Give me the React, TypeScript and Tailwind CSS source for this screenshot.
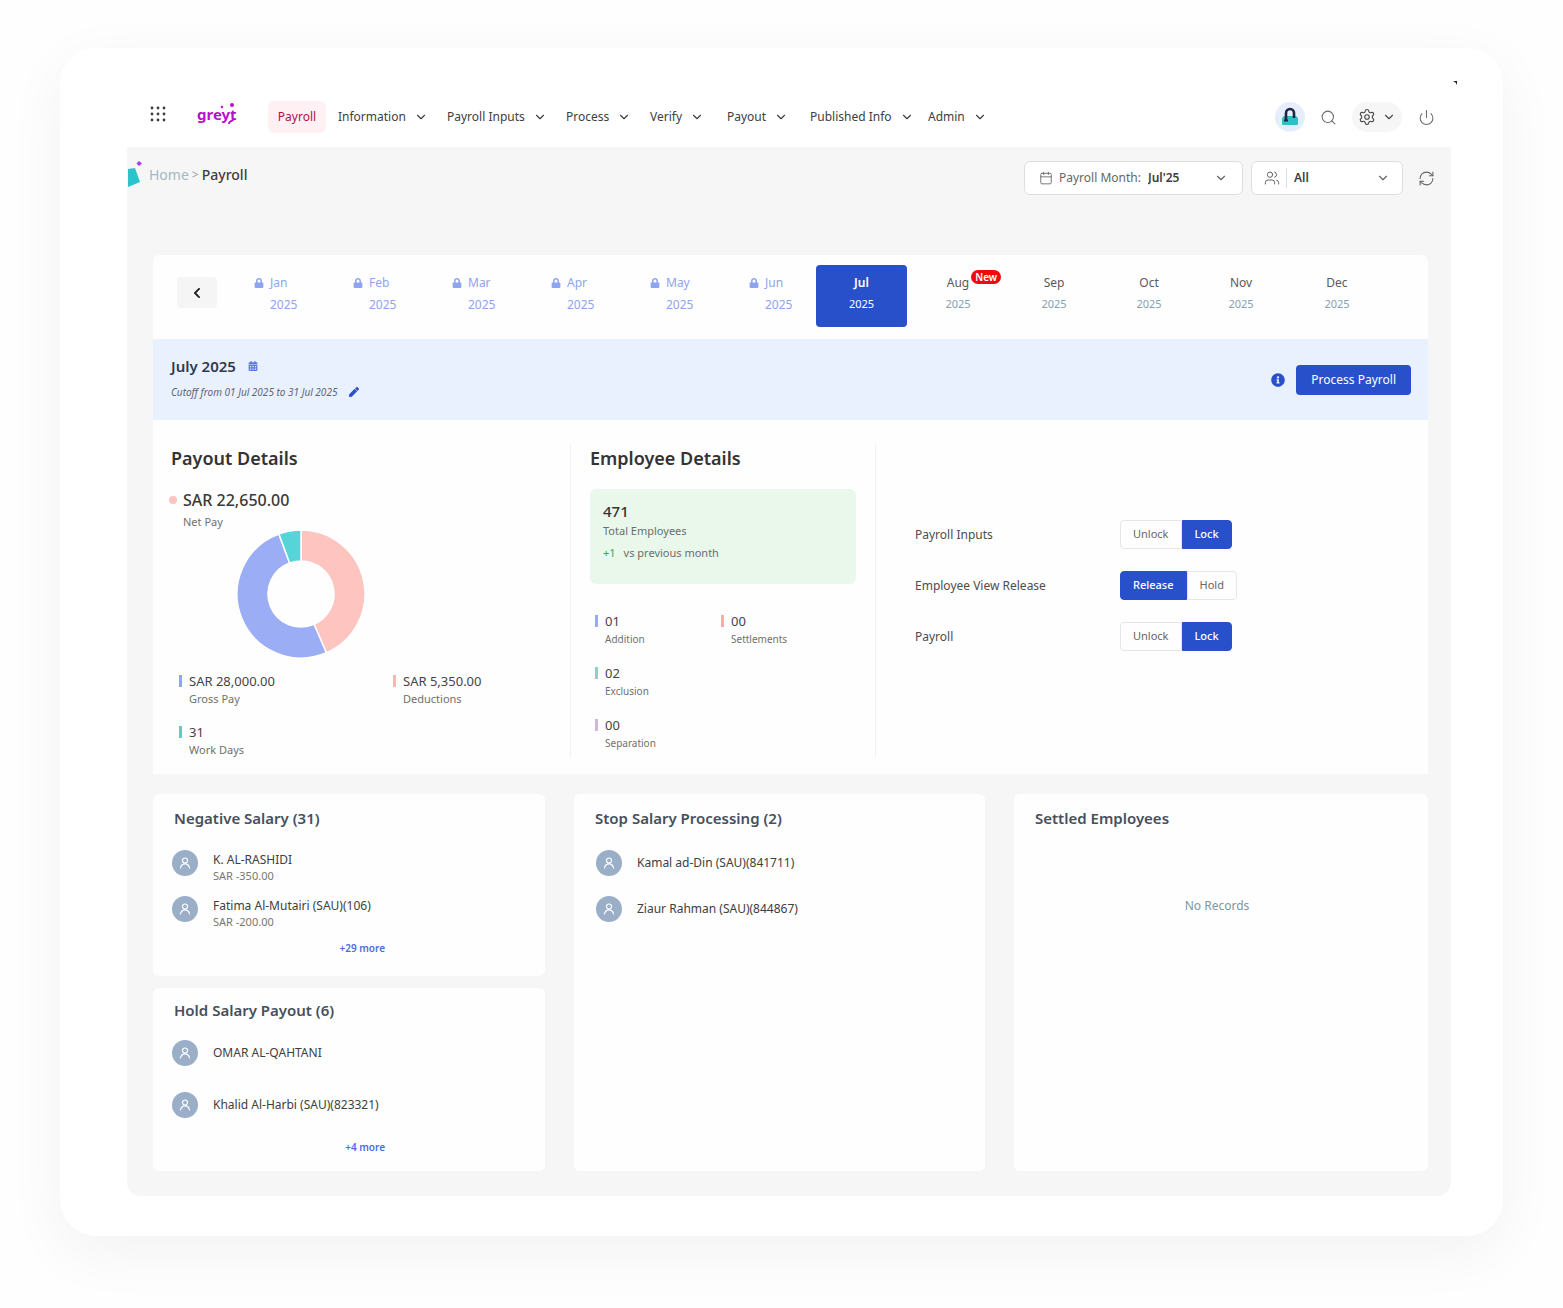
import type { ReactNode } from "react";
import { Calendar, ChevronDown, Power, RefreshCw, Search, Settings, Users } from "lucide-react";
import { FaCalendarAlt, FaChevronLeft, FaInfoCircle, FaLock, FaPen } from "react-icons/fa";
import clsx from "clsx";

const menus = ["Information", "Payroll Inputs", "Process", "Verify", "Payout", "Published Info", "Admin"];

const lockedMonths = ["Jan", "Feb", "Mar", "Apr", "May", "Jun"];
const openMonths = ["Aug", "Sep", "Oct", "Nov", "Dec"];

type Person = { name: string; amount?: string };

const negative: Person[] = [
  { name: "K. AL-RASHIDI", amount: "SAR -350.00" },
  { name: "Fatima Al-Mutairi (SAU)(106)", amount: "SAR -200.00" },
];
const onHold: Person[] = [{ name: "OMAR AL-QAHTANI" }, { name: "Khalid Al-Harbi (SAU)(823321)" }];
const stopped: Person[] = [{ name: "Kamal ad-Din (SAU)(841711)" }, { name: "Ziaur Rahman (SAU)(844867)" }];

function Logo() {
  return (
    <a href="#" className="relative ml-[31px] w-[71px] pb-1.5 text-[15px] leading-6 font-bold text-[#bb0fc9]">
      greyt
      <svg className="absolute top-0 left-0" width="42" height="26" viewBox="0 0 42 26" fill="none">
        <circle cx="35" cy="3" r="2" fill="#bb0fc9" />
        <circle cx="25" cy="5" r="1.2" fill="#bb0fc9" />
        <path d="M32 21c1-2 2-2 4-3" stroke="#bb0fc9" strokeWidth="2" strokeLinecap="round" />
      </svg>
    </a>
  );
}

function AppsIcon() {
  return (
    <svg width="16" height="16" viewBox="0 0 16 16" fill="#3d3d3d">
      {[2, 8, 14].map((y) => [2, 8, 14].map((x) => <circle key={`${x}-${y}`} cx={x} cy={y} r="1.4" />))}
    </svg>
  );
}

function Header() {
  return (
    <header className="flex h-[99px] items-center pt-[39px] pr-4 pl-[23px] text-xs text-[#404040]">
      <button aria-label="Apps" className="pb-1.5">
        <AppsIcon />
      </button>
      <Logo />
      <a href="#" className="flex h-8 w-[58px] items-center justify-center rounded-md bg-[#fff0f3] text-[#b3123f]">
        Payroll
      </a>
      <nav className="ml-3 grid shrink-0 grid-cols-[109px_119px_84px_77px_83px_118px_58px]">
        {menus.map((m) => (
          <button key={m} className="flex items-center gap-2 whitespace-nowrap">
            {m}
            <ChevronDown size={14} className="shrink-0" />
          </button>
        ))}
      </nav>
      <div className="ml-auto flex items-center text-[#6b6b6b]">
        <button aria-label="Assistant" className="flex size-[30px] items-center justify-center rounded-full bg-[#e6eefc]">
          <svg width="18" height="20" viewBox="0 0 18 20" fill="none">
            <path d="M1 11l2-2h12l2 2v6q0 1-1 1H2q-1 0-1-1z" fill="#2fc0c6" />
            <path d="M5 13V6a4 4 0 0 1 8 0v5" stroke="#1f2545" strokeWidth="2.6" />
            <path d="M3 13.500h4" stroke="#1f2545" strokeWidth="2" />
          </svg>
        </button>
        <button aria-label="Search" className="ml-[15px]">
          <Search size={17} strokeWidth={1.5} />
        </button>
        <button aria-label="Settings" className="ml-[15px] flex h-[30px] w-[50px] items-center justify-center gap-1.5 rounded-full bg-[#f6f6f6] text-[#484848]">
          <Settings size={18} strokeWidth={1.5} />
          <ChevronDown size={14} />
        </button>
        <button aria-label="Log out" className="ml-4">
          <Power size={17} strokeWidth={1.5} />
        </button>
      </div>
    </header>
  );
}

function Toolbar() {
  return (
    <div className="flex h-[108px] items-start pt-3.5 pr-4 text-xs">
      <svg width="22" height="28" viewBox="0 0 22 28" className="shrink-0">
        <path d="M1 8l7-1 5 14-12 5z" fill="#2bc4cb" />
        <path d="M12 0l3 2.500-3 2.500-2.500-2.500z" fill="#a83be8" />
      </svg>
      <nav className="flex items-center gap-[3px] pt-1 text-sm leading-5">
        <a href="#" className="text-[#a3b8c6]">Home</a>
        <span className="text-xs text-[#8fa3b2]">&gt;</span>
        <span className="font-medium text-[#3d3d3d]">Payroll</span>
      </nav>
      <div className="ml-auto flex items-center text-[#666]">
        <label className="flex h-[34px] w-[219px] items-center rounded-md border border-[#dedede] bg-white px-3.5">
          <Calendar size={14} strokeWidth={1.5} />
          <span className="ml-1.5 whitespace-nowrap">Payroll Month:</span>
          <select className="ml-[7px] flex-1 appearance-none bg-transparent font-semibold text-[#3d3d3d]">
            <option>Jul'25</option>
          </select>
          <ChevronDown size={14} className="pointer-events-none" />
        </label>
        <label className="ml-2 flex h-[34px] w-[152px] items-center rounded-md border border-[#dedede] bg-white px-3">
          <Users size={16} strokeWidth={1.5} />
          <span className="ml-1.5 h-5 border-l border-[#dedede]" />
          <select aria-label="Employees" className="ml-[7px] flex-1 appearance-none bg-transparent font-semibold text-[#3d3d3d]">
            <option>All</option>
          </select>
          <ChevronDown size={14} className="pointer-events-none" />
        </label>
        <button aria-label="Refresh" className="ml-[15px]">
          <RefreshCw size={17} strokeWidth={1.5} />
        </button>
      </div>
    </div>
  );
}

function MonthStrip() {
  return (
    <div className="grid h-[84px] grid-cols-[101fr_repeat(5,99fr)_67fr_91fr_102fr_90fr_100fr_84fr_108fr_37fr] pt-2.5 text-xs">
      <div className="pt-3 pl-6">
        <button aria-label="Previous months" className="flex h-[31px] w-10 items-center justify-center rounded bg-[#f5f5f5] text-[#222]">
          <FaChevronLeft size={12} />
        </button>
      </div>
      {lockedMonths.map((m) => (
        <button key={m} className="flex items-start gap-1.5 self-start pt-[7px] text-left leading-[22px] text-[#8ea4ee]">
          <FaLock size={10} className="mt-1.5" />
          <span>
            {m}
            <br />
            2025
          </span>
        </button>
      ))}
      <button className="flex h-[62px] flex-col items-center rounded bg-[#2850cb] pt-[7px] leading-[22px] text-white">
        <span className="font-semibold">Jul</span>
        <span className="text-[11px] leading-5">2025</span>
      </button>
      {openMonths.map((m) => (
        <button key={m} className="flex flex-col items-center self-start pt-[7px] leading-[22px] text-[#5a5a5a]">
          <span className="relative">
            {m}
            {m === "Aug" && (
              <span className="absolute -top-0.5 left-full ml-0.5 flex h-3.5 w-[30px] items-center justify-center rounded-full bg-[#ee0a0f] text-[10px] font-semibold text-white">
                New
              </span>
            )}
          </span>
          <span className="text-[11px] leading-5 text-[#86a0b3]">2025</span>
        </button>
      ))}
    </div>
  );
}

function Banner() {
  return (
    <div className="flex h-[81px] items-center justify-between bg-[#eaf1fe] pr-[17px] pl-[18px]">
      <div className="pb-0.5">
        <h1 className="flex items-center gap-3 text-[15px] leading-6 font-semibold text-[#2f3a52]">
          July 2025
          <FaCalendarAlt size={10} className="text-[#5b7be4]" />
        </h1>
        <p className="mt-0.5 flex items-center gap-3 text-[10px] leading-6 text-[#5d6675] italic">
          Cutoff from 01 Jul 2025 to 31 Jul 2025
          <button aria-label="Edit cutoff" className="text-[#2850cb]">
            <FaPen size={10} />
          </button>
        </p>
      </div>
      <div className="flex items-center gap-[11px] text-[#2850cb]">
        <FaInfoCircle size={14} />
        <button className="h-[30px] rounded bg-[#2850cb] px-[15px] text-xs text-white">Process Payroll</button>
      </div>
    </div>
  );
}

type StatProps = { value: string; label: string; color: string; small?: boolean };

function Stat({ value, label, color, small }: StatProps) {
  return (
    <div className="flex gap-[7px]">
      <span className={clsx("mt-1 h-3 w-[3px] shrink-0", color)} />
      <div>
        <p className="text-[13px] leading-5 text-[#444]">{value}</p>
        <p className={clsx("leading-4 text-[#707070]", small ? "text-[10px]" : "text-[11px]")}>{label}</p>
      </div>
    </div>
  );
}

// angles are clockwise from twelve o'clock
function slice(from: number, to: number) {
  const at = (deg: number, r: number) => {
    const a = (deg * Math.PI) / 180;
    return `${65 + r * Math.sin(a)} ${65 - r * Math.cos(a)}`;
  };
  const large = to - from > 180 ? 1 : 0;
  return `M${at(from, 64)}A64 64 0 ${large} 1 ${at(to, 64)}L${at(to, 33)}A33 33 0 ${large} 0 ${at(from, 33)}Z`;
}

function PayoutDetails() {
  return (
    <section className="pr-4 pl-[18px]">
      <h2 className="text-lg leading-7 font-semibold text-[#333]">Payout Details</h2>
      <div className="mt-4 flex items-center gap-1.5">
        <span className="-ml-0.5 size-2 rounded-full bg-[#fec4c0]" />
        <span className="text-base leading-6 font-medium text-[#3a3a3a]">SAR 22,650.00</span>
      </div>
      <p className="pl-3 text-[11px] leading-5 text-[#707070]">Net Pay</p>
      <svg width="130" height="130" viewBox="0 0 130 130" className="-mt-[3px] ml-[65px]" stroke="#fff" strokeWidth="1.500">
        <path d={slice(0, 156.7)} fill="#fec4c0" />
        <path d={slice(156.7, 339.8)} fill="#9baef5" />
        <path d={slice(339.8, 360)} fill="#55d5d8" />
      </svg>
      <div className="mt-3 grid grid-cols-[214px_1fr] gap-y-[15px] pl-2">
        <Stat value="SAR 28,000.00" label="Gross Pay" color="bg-[#8fa3f7]" />
        <Stat value="SAR 5,350.00" label="Deductions" color="bg-[#feb5b0]" />
        <Stat value="31" label="Work Days" color="bg-[#4fd0d2]" />
      </div>
    </section>
  );
}

function EmployeeDetails() {
  return (
    <section className="border-x border-[#f2f2f2] px-[19px]">
      <h2 className="text-lg leading-7 font-semibold text-[#333]">Employee Details</h2>
      <div className="mt-[17px] h-[95px] rounded-md bg-[#e9f8eb] px-[13px] pt-2.5 text-[11px] text-[#6a6f6b]">
        <p className="text-[15px] leading-6 font-medium text-[#333]">471</p>
        <p className="leading-4">Total Employees</p>
        <p className="mt-1 flex gap-2 leading-5">
          <span className="text-[#34a853]">+1</span> vs previous month
        </p>
      </div>
      <div className="mt-[27px] grid grid-cols-[126px_1fr] gap-y-4 pl-[5px]">
        <Stat small value="01" label="Addition" color="bg-[#98a8fb]" />
        <Stat small value="00" label="Settlements" color="bg-[#feaaa7]" />
        <Stat small value="02" label="Exclusion" color="bg-[#93cdca]" />
        <span />
        <Stat small value="00" label="Separation" color="bg-[#d1b6da]" />
      </div>
    </section>
  );
}

function Toggle({ label, options, active }: { label: string; options: string[]; active: string }) {
  return (
    <div className="grid h-[51px] grid-cols-[205px_1fr] items-center">
      <span className="text-xs text-[#4d4d4d]">{label}</span>
      <div role="group" aria-label={label} className="flex text-[11px]">
        {options.map((o) => (
          <button
            key={o}
            aria-pressed={o === active}
            className={clsx(
              "h-[29px] border px-3 first:rounded-l last:rounded-r",
              o === active ? "border-[#2850cb] bg-[#2850cb] font-medium text-white" : "border-[#e6e6e6] text-[#666]"
            )}
          >
            {o}
          </button>
        ))}
      </div>
    </div>
  );
}

function Card({ title, className, children }: { title: string; className: string; children: ReactNode }) {
  return (
    <section className={clsx("rounded-md bg-[#fefefe]", className)}>
      <h3 className="px-[21px] text-[15px] leading-6 font-semibold text-[#46505c]">{title}</h3>
      {children}
    </section>
  );
}

function People({ people, className, rowClass }: { people: Person[]; className: string; rowClass: string }) {
  return (
    <ul className={className}>
      {people.map((p) => (
        <li key={p.name} className={clsx("flex items-center gap-[15px]", rowClass)}>
          <span className="flex size-[26px] shrink-0 items-center justify-center rounded-full bg-[#9aaec8]">
            <svg width="12" height="12" viewBox="0 0 12 12" fill="none" stroke="#fff" strokeWidth="1.200" strokeLinecap="round">
              <circle cx="6" cy="3.500" r="2.500" />
              <path d="M1.500 11c1-5.500 8-5.500 9 0" />
            </svg>
          </span>
          <div className={clsx(p.amount && "pt-2")}>
            <p className="text-xs leading-[18px] text-[#404040]">{p.name}</p>
            {p.amount && <p className="text-[11px] leading-[14px] text-[#777]">{p.amount}</p>}
          </div>
        </li>
      ))}
    </ul>
  );
}

function MoreLink({ children }: { children: ReactNode }) {
  return (
    <a href="#" className="mt-1.5 ml-[160px] block w-[72px] text-right text-[10px] leading-5 font-semibold text-[#4a6ee0]">
      {children}
    </a>
  );
}

export default function App() {
  return (
    <div className="min-h-screen bg-[#fefefe] px-[60px] pt-12 pb-[72px] font-['Noto_Sans','Open_Sans',sans-serif]">
      <div className="relative rounded-[36px] bg-white pr-[52px] pb-10 pl-[67px] shadow-[0_16px_60px_rgba(0,0,0,0.05)]">
        <svg className="absolute top-[33px] right-[46px]" width="4" height="4" viewBox="0 0 4 4">
          <path d="M0 0h4v4q-1-3-4-4z" fill="#222" />
        </svg>
        <Header />
        <main className="rounded-b-[14px] bg-[#f6f6f6] pb-[25px]">
          <Toolbar />
          <div className="mr-[23px] ml-[26px]">
            <div className="overflow-hidden rounded-t-md bg-[#fefefe]">
              <MonthStrip />
              <Banner />
              <div className="grid grid-cols-[417fr_306fr_552fr] pt-6 pb-4">
                <PayoutDetails />
                <EmployeeDetails />
                <section className="pt-[65px] pl-[39px]">
                  <Toggle label="Payroll Inputs" options={["Unlock", "Lock"]} active="Lock" />
                  <Toggle label="Employee View Release" options={["Release", "Hold"]} active="Release" />
                  <Toggle label="Payroll" options={["Unlock", "Lock"]} active="Lock" />
                </section>
              </div>
            </div>
            <div className="mt-5 grid grid-cols-[392fr_411fr_414fr] gap-x-[29px]">
              <div className="flex flex-col gap-3">
                <Card title="Negative Salary (31)" className="h-[182px] pt-3">
                  <People people={negative} className="px-[19px] pt-2.5" rowClass="h-[46px]" />
                  <MoreLink>+29 more</MoreLink>
                </Card>
                <Card title="Hold Salary Payout (6)" className="h-[183px] pt-2.5">
                  <People people={onHold} className="px-[19px] pt-[5px]" rowClass="h-[52px]" />
                  <MoreLink>+4 more</MoreLink>
                </Card>
              </div>
              <Card title="Stop Salary Processing (2)" className="pt-3">
                <People people={stopped} className="px-[22px] pt-2.5" rowClass="h-[46px]" />
              </Card>
              <Card title="Settled Employees" className="pt-3">
                <p className="pt-16 pr-2 text-center text-xs leading-6 text-[#8094a6]">No Records</p>
              </Card>
            </div>
          </div>
        </main>
      </div>
    </div>
  );
}
